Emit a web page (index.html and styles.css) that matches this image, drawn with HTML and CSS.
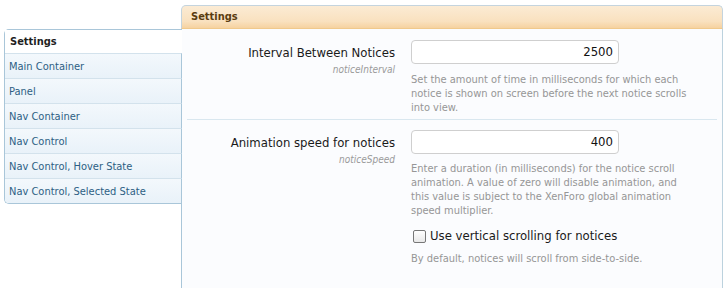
FILE: index.html
```html
<!DOCTYPE html>
<html>
<head>
<meta charset="utf-8">
<link rel="stylesheet" href="styles.css">
</head>
<body>
<div class="page">
  <div class="spacer"></div>
  <div class="tab">Settings</div>
  <div class="sidebar">
    <div class="side-head">Settings</div>
    <a class="side-item">Main Container</a>
    <a class="side-item">Panel</a>
    <a class="side-item">Nav Container</a>
    <a class="side-item">Nav Control</a>
    <a class="side-item">Nav Control, Hover State</a>
    <a class="side-item last">Nav Control, Selected State</a>
  </div>
  <div class="content">
    <div class="row">
      <div class="label-col">
        <div class="label">Interval Between Notices</div>
        <div class="hint">noticeInterval</div>
      </div>
      <div class="field-col">
        <div class="input">2500</div>
        <p class="explain">Set the amount of time in milliseconds for which each notice is shown on screen before the next notice scrolls into view.</p>
      </div>
    </div>
    <div class="sep"></div>
    <div class="row row2">
      <div class="label-col">
        <div class="label">Animation speed for notices</div>
        <div class="hint">noticeSpeed</div>
      </div>
      <div class="field-col">
        <div class="input">400</div>
        <p class="explain explain-b">Enter a duration (in milliseconds) for the notice scroll animation. A value of zero will disable animation, and this value is subject to the XenForo global animation speed multiplier.</p>
        <label class="check"><span class="box"></span>Use vertical scrolling for notices</label>
        <p class="explain explain2">By default, notices will scroll from side-to-side.</p>
      </div>
    </div>
  </div>
</div>
</body>
</html>
```
FILE: styles.css
```css
html, body {
  margin: 0;
  padding: 0;
  background: #ffffff;
}
body {
  font-family: "DejaVu Sans Condensed", "DejaVu Sans", sans-serif;
  font-stretch: condensed;
  width: 728px;
  height: 288px;
  overflow: hidden;
}
.page {
  display: grid;
  grid-template-columns: 177px 542px;
  grid-template-rows: 24px 259px;
  padding: 5px 0 0 4px;
}
.tab {
  border: 1px solid #c4d4de;
  border-bottom: 1px solid #f0c98c;
  border-radius: 5px 5px 0 0;
  background: linear-gradient(#fbebd4, #f9e1bf 70%, #f6d2a0);
  color: #5a3c10;
  font-weight: bold;
  font-size: 11px;
  line-height: 22px;
  padding-left: 9px;
}
.sidebar {
  position: relative;
  z-index: 1;
  align-self: start;
  margin-right: -1px;
  border: 1px solid #a9c6d9;
  border-right: none;
  border-radius: 5px 0 0 5px;
  background: #ffffff;
  display: flex;
  flex-direction: column;
}
.side-head {
  height: 23px;
  line-height: 24px;
  padding-left: 5px;
  font-size: 11px;
  font-weight: bold;
  color: #1f1f1f;
  background: #ffffff;
}
.side-item {
  display: block;
  height: 24px;
  line-height: 25px;
  padding-left: 4px;
  font-size: 11px;
  color: #2d5f84;
  background: linear-gradient(#f3f8fc, #e9f2f9);
  border-top: 1px solid #d3e2ec;
  border-right: 1px solid #a9c6d9;
}
.side-item.last {
  border-bottom-left-radius: 4px;
}
.content {
  border-left: 1px solid #a9c6d9;
  border-right: 1px solid #bcd2de;
  background: #fbfcfe;
  padding-top: 11px;
}
.row {
  display: flex;
}
.label-col {
  width: 213px;
  flex: none;
  text-align: right;
  padding-top: 4px;
}
.label {
  font-size: 13px;
  line-height: 18px;
  color: #1a1a1a;
}
.hint {
  font-size: 10px;
  line-height: 12px;
  margin-top: 2px;
  font-style: italic;
  color: #9a9a9a;
}
.field-col {
  margin-left: 16px;
  width: 300px;
}
.input {
  box-sizing: border-box;
  width: 208px;
  height: 24px;
  border: 1px solid #cfcfcf;
  border-radius: 4px;
  background: #ffffff;
  font-size: 13px;
  line-height: 22px;
  text-align: right;
  padding-right: 5px;
  color: #111;
}
.explain {
  margin: 9px 0 0 0;
  font-size: 11px;
  line-height: 14px;
  color: #969696;
  width: 286px;
}
.explain-b {
  margin-top: 8px;
}
.sep {
  height: 1px;
  background: #d9e7ef;
  margin: 4px 5px 10px 5px;
}
.check {
  display: flex;
  align-items: center;
  margin-top: 9px;
  font-size: 13px;
  line-height: 18px;
  color: #1a1a1a;
}
.box {
  width: 11px;
  height: 11px;
  border: 1px solid #777;
  border-radius: 2px;
  background: linear-gradient(#ffffff, #e8e8e8);
  margin: 0 4px 0 2px;
}
.explain2 {
  margin-top: 7px;
}
```
